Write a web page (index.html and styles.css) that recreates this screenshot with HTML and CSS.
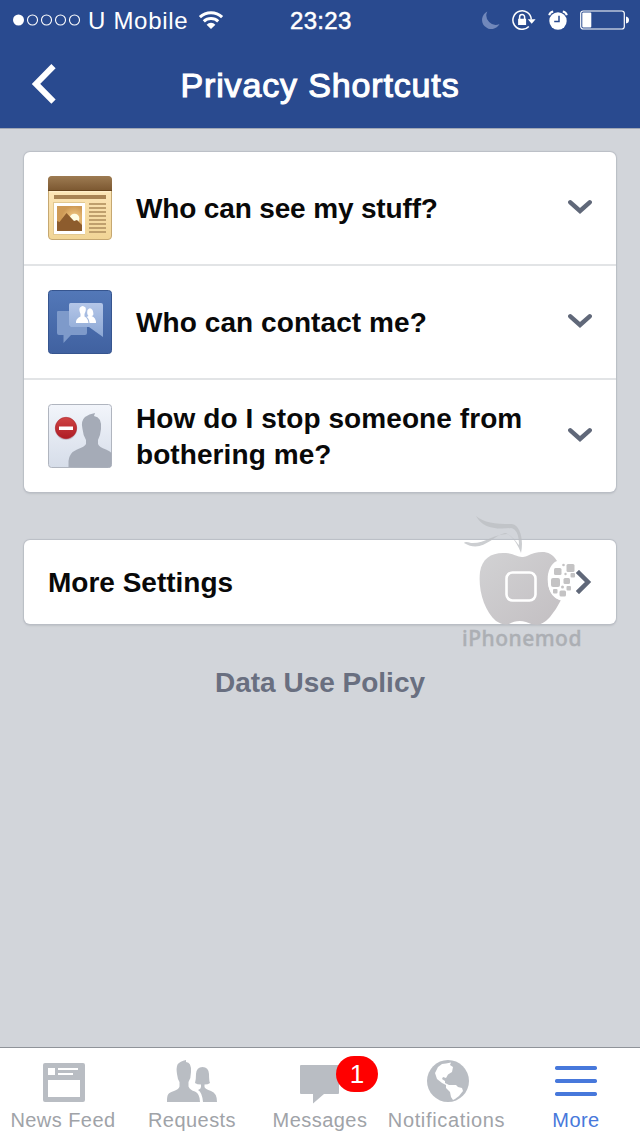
FILE: index.html
```html
<!DOCTYPE html>
<html lang="en">
<head>
<meta charset="utf-8">
<title>Privacy Shortcuts</title>
<link rel="stylesheet" href="styles.css">
</head>
<body>
<div class="screen">
  <header class="header">
    <div class="status">
      <div class="status-left">
        <svg class="signal" width="68" height="12" viewBox="0 0 68 12" fill="none" stroke="#fff" stroke-width="1.1">
          <circle cx="5.5" cy="6" r="5.5" fill="#fff" stroke="none"/><circle cx="19.5" cy="6" r="5"/><circle cx="33.5" cy="6" r="5"/><circle cx="47.5" cy="6" r="5"/><circle cx="61.5" cy="6" r="5"/>
        </svg>
        <span class="carrier">U Mobile</span>
        <svg class="wifi" width="26" height="20" viewBox="0 0 26 20" fill="none" stroke="#fff" stroke-width="3">
          <path d="M1.900 7.200A16 16 0 0 1 24.100 7.200"/><path d="M5.800 11.400A10.400 10.400 0 0 1 20.200 11.400"/><path d="M13 19L8.600 14.700A6.200 6.200 0 0 1 17.400 14.700Z" fill="#fff" stroke="none"/>
        </svg>
      </div>
      <span class="time">23:23</span>
      <div class="status-right">
        <svg width="19" height="19" viewBox="0 0 19 19"><path fill="#7188bb" d="M6.300 .6A9.200 9.200 0 1 0 18.500 13A9.300 9.300 0 0 1 6.300 .6Z"/></svg>
        <svg width="24" height="20" viewBox="0 0 24 20">
          <path fill="none" stroke="#fff" stroke-width="1.500" d="M16.800 16.400A9.200 9.200 0 1 1 19.300 9.500"/><path fill="#fff" d="M15.800 9.200H23.600L19.700 13.700ZM6.100 8.800H14.100V15H6.100Z"/><path fill="none" stroke="#fff" stroke-width="1.500" d="M7.600 9V7A2.500 2.500 0 0 1 12.600 7V9"/>
        </svg>
        <svg width="20" height="20" viewBox="0 0 20 20">
          <circle cx="10" cy="11" r="8.700" fill="#fff"/><path fill="none" stroke="#fff" stroke-width="2" d="M1.200 5.200Q1.900 2.200 5.200 1.500M18.800 5.200Q18.100 2.200 14.800 1.500"/><path fill="none" stroke="#294a8f" stroke-width="1.500" d="M11 5.800V11.500H6.200"/>
        </svg>
        <svg width="50" height="20" viewBox="0 0 50 20">
          <rect x=".7" y="1" width="43.600" height="18" rx="2.500" fill="none" stroke="#fff" stroke-width="1.200"/><rect x="2.300" y="2.600" width="9" height="14.800" rx="1" fill="#fff"/><path fill="#fff" d="M46 6.500Q49 7 49 10T46 13.500Z"/>
        </svg>
      </div>
    </div>
    <div class="nav">
      <svg class="back" width="26" height="40" viewBox="0 0 26 40"><path fill="none" stroke="#fff" stroke-width="6" d="M22.500 2.200L5 19.900L22.500 37.600"/></svg>
      <h1 class="title">Privacy Shortcuts</h1>
    </div>
  </header>

  <main class="content">
    <section class="card">
      <div class="row">
        <svg class="picture" viewBox="0 0 64 64">
          <defs>
            <linearGradient id="paper" x2="0" y2="1"><stop stop-color="#ffeac0"/><stop offset="1" stop-color="#f1d596"/></linearGradient>
            <linearGradient id="wood" x2="0" y2="1"><stop stop-color="#9d7b52"/><stop offset="1" stop-color="#7b5730"/></linearGradient>
            <radialGradient id="sunset" cx=".68" cy=".5"><stop stop-color="#f9d28d"/><stop offset="1" stop-color="#ce9a56"/></radialGradient>
          </defs>
          <rect x=".5" y=".5" width="63" height="63" rx="3.500" fill="url(#paper)" stroke="#c6a871"/>
          <path d="M0 15V4Q0 0 4 0H60Q64 0 64 4V15Z" fill="url(#wood)"/><path d="M0 14.500H64" stroke="#68451f"/><path d="M1 15.700H63" stroke="#fff1cf"/>
          <path d="M6 19H58V23H6Z" fill="#a98454"/>
          <rect x="5" y="26" width="32" height="33" fill="#e2c890"/><rect x="6" y="27" width="31" height="31" fill="#fff"/>
          <path d="M9 30H34V55H9Z" fill="url(#sunset)"/><circle cx="26.500" cy="42.500" r="4.800" fill="#fffce3"/>
          <path d="M9 45L11.500 46L18.500 37L26 45L29 44L34 49V55H9Z" fill="#8d5c2d"/>
          <path d="M41 28H58M41 32H58M41 36H58M41 40H58M41 44H58M41 48H58M41 52H58M41 56H58" stroke="#bfa06d" stroke-width="1.800"/>
        </svg>
        <span class="label label-see">Who can see my stuff?</span>
        <svg class="chevron" viewBox="0 0 24 16"><path d="M2.300 3.300L12 12L21.700 3.300"/></svg>
      </div>
      <div class="row">
        <svg class="picture" viewBox="0 0 64 64">
          <defs>
            <linearGradient id="blue" x2="0" y2="1"><stop stop-color="#5378b8"/><stop offset="1" stop-color="#4061a0"/></linearGradient>
            <linearGradient id="bubble" x2="0" y2="1"><stop stop-color="#b4c6e8"/><stop offset="1" stop-color="#8ba7d4"/></linearGradient>
          </defs>
          <rect x=".5" y=".5" width="63" height="63" rx="3" fill="url(#blue)" stroke="#36558f"/>
          <path fill="#7e9aca" d="M10 21H21V35Q21 37 23 37H39V43Q39 45 37 45H23L15.500 53V45H11Q9 45 9 43V22Q9 21 10 21Z"/>
          <path fill="url(#bubble)" d="M22.500 13H53Q55 13 55 15V47L41 37H23Q21 37 21 35V15Q21 13 22.500 13Z"/>
          <g fill="#fff"><path d="M28 33Q27.500 28.500 32.500 26.500V24Q30.500 19 32 17.500Q34.500 14.500 37.500 17.500Q38.500 20 36.500 24V26.500Q40 28 40.500 33Z"/><path d="M41.500 33Q41 28 38.500 27L40.500 26Q38.500 24 39.500 20Q42 16.500 44.500 20Q46 24 45 25.500L43.500 26Q48 27.500 48 33Z"/></g>
        </svg>
        <span class="label label-contact">Who can contact me?</span>
        <svg class="chevron" viewBox="0 0 24 16"><path d="M2.300 3.300L12 12L21.700 3.300"/></svg>
      </div>
      <div class="row">
        <svg class="picture" viewBox="0 0 64 64">
          <defs>
            <linearGradient id="pale" x2="0" y2="1"><stop stop-color="#f2f5fb"/><stop offset="1" stop-color="#d6dde9"/></linearGradient>
            <linearGradient id="red" x2="0" y2="1"><stop stop-color="#cf4444"/><stop offset="1" stop-color="#ae1b24"/></linearGradient>
          </defs>
          <rect x=".5" y=".5" width="63" height="63" rx="3" fill="url(#pale)" stroke="#b0b5bf"/>
          <path fill="#a5abb7" d="M20.500 63V57Q21 49 29 45.500Q37 42.500 38 40V36Q35 31 34.500 25Q32.500 17 37 13Q41 10 47 9L46 12Q54 13 53 25Q52.500 31 50 36V40Q51 43 58 45.500Q62 47 63.500 49V62L62 63.500Z"/>
          <circle cx="18" cy="25" r="11" fill="#9d7d91" opacity=".35"/><circle cx="18" cy="24" r="10.700" fill="url(#red)" stroke="#ab252d" stroke-width=".6"/><rect x="11" y="22.500" width="14" height="3.500" fill="#fff"/>
        </svg>
        <span class="label label-stop">How do I stop someone from bothering me?</span>
        <svg class="chevron" viewBox="0 0 24 16"><path d="M2.300 3.300L12 12L21.700 3.300"/></svg>
      </div>
    </section>
    <section class="card more-card">
      <span class="label">More Settings</span>
      <svg class="forward" width="16" height="24" viewBox="0 0 16 24"><path d="M3 3L12 12L3 21"/></svg>
      <div class="watermark">
        <svg width="130" height="116" viewBox="0 0 130 116">
          <defs><linearGradient id="apple" y2="1"><stop stop-color="#d2d2d4"/><stop offset="1" stop-color="#c3bfc2"/></linearGradient></defs>
          <path fill="#bbbdc1" opacity=".75" d="M14 0C22 7 34 8 50 8C58 9 62 24 59 37C56 28 49 18 43 17C30 20 20 38 2 27Q3 25 9 27C22 28 32 18 45 18C51 20 55 27 57 29C57 18 54 13 49 12C32 14 20 11 14 0Z"/>
          <path fill="url(#apple)" d="M18 56C20 42 30 36 44 37C55 38 56 43 65 40C76 35 88 33 95 45C82 50 82 80 99 84Q94 94 88 101C78 112 72 109 64 106C58 104 52 105 47 108Q42 110 34 105C22 94 16 74 18 56Z"/>
          <rect x="44.500" y="56.500" width="29" height="28" rx="6" fill="none" stroke="#fff" stroke-width="2.600"/>
          <path fill="#fff" d="M96 45Q105 40 111 46Q115 50 115 58Q115 68 111 76Q108 83 100 85Q87 81 86 67Q85 52 96 45Z"/>
          <g fill="#c4c3c4"><rect x="92" y="52" width="7.500" height="7" rx="1.500"/><rect x="104.500" y="48" width="8" height="8" rx="1.500"/><rect x="108.500" y="57" width="4.500" height="4.500" rx="1"/><rect x="89" y="62" width="9" height="9" rx="2"/><rect x="101.500" y="62" width="6.500" height="6" rx="1.500"/><rect x="104.500" y="70" width="4.500" height="4.500" rx="1"/><rect x="91" y="73" width="4.500" height="4.500" rx="1"/><rect x="97.500" y="74.500" width="6.500" height="6" rx="1.500"/><circle cx="101.500" cy="49" r="1.300"/><circle cx="103.500" cy="58" r="1.200"/><circle cx="100.500" cy="71" r="1.500"/></g>
        </svg>
        <span class="watermark-name">iPhonemod</span>
      </div>
    </section>
    <a class="policy">Data Use Policy</a>
  </main>

  <nav class="tabs">
    <div class="tab">
      <svg class="tab-icon" viewBox="0 0 60 48"><path fill="#b9bdc3" fill-rule="evenodd" d="M11 7H49Q51 7 51 9V44Q51 46 49 46H11Q9 46 9 44V9Q9 7 11 7ZM14 12V19H21V12ZM24 12V14H44V12ZM24 17V19H39V17ZM14 24V41H46V24Z"/></svg>
      <span class="news-label">News Feed</span>
    </div>
    <div class="tab">
      <svg class="tab-icon" viewBox="0 0 60 48" fill="#b9bdc3"><path d="M5 46C5 38 6 37 12 35Q17 33 17.500 30.500V26Q15.500 23 15 18Q14 12 15.500 8.500Q18 5 24 4V6Q29.500 6 29 16Q29 22 26.500 26V30.500Q28 34 33 35.500Q38 38 38 46Z"/><path d="M41 46Q40 36 36 34Q39 33 39 31V28.500Q35 28.500 33 27Q34 24 34 18Q34.500 11 40.500 11Q46.500 11 47 18Q47 25 48 27Q46 28.500 42.500 28.500V31Q43 33 49 35Q55 37 55 46Z"/></svg>
      <span class="requests-label">Requests</span>
    </div>
    <div class="tab">
      <svg class="tab-icon" viewBox="0 0 60 48"><path fill="#b9bdc3" d="M11 9H48Q49 9 49 10V37Q49 38 48 38H34L23 47.500V38H11Q10 38 10 37V10Q10 9 11 9Z"/></svg>
      <span class="badge">1</span>
      <span class="messages-label">Messages</span>
    </div>
    <div class="tab">
      <svg class="tab-icon" viewBox="0 0 60 48"><circle cx="30" cy="25" r="21" fill="#b9bdc3"/><path fill="#fff" d="M17 17L20 11L24 8L28 7.500L33 6.500L32 9L35 11L34 16L30 18.500L28 22L25 21L24 23L27 25L27 27L31 29L38 29L40 31L44 32L45 35L41 40L37 43L35 44L33 41L32 36L28 32L28 29L24 27L19 23Z"/></svg>
      <span class="notifications-label">Notifications</span>
    </div>
    <div class="tab active">
      <svg class="tab-icon" viewBox="0 0 60 48" fill="#4778db"><rect x="9" y="10" width="42" height="4" rx="1.700"/><rect x="9" y="23" width="42" height="4" rx="1.700"/><rect x="9" y="36" width="42" height="4" rx="1.700"/></svg>
      <span class="more-label">More</span>
    </div>
  </nav>
</div>
</body>
</html>
```

FILE: styles.css
```css
* { box-sizing: border-box; }
body { margin: 0; font-family: "Liberation Sans", Arial, sans-serif; }
svg { display: block; flex: none; }
.screen { width: 640px; height: 1136px; display: flex; flex-direction: column; background: #d2d5da; }
.header { height: 129px; background: #294a8f; color: #fff; flex: none; border-bottom: 1px solid #a0a7b5; }
.status { height: 40px; display: grid; grid-template-columns: 290px 62px 1fr; align-items: center; }
.status-left { display: flex; align-items: center; padding-left: 13px; }
.carrier { width: 99px; margin-left: 7px; margin-right: 11px; padding-top: 2px; font-size: 24px; letter-spacing: .7px; white-space: nowrap; }
.time { padding-top: 2px; font-size: 24px; letter-spacing: .3px; -webkit-text-stroke: .5px #fff; }
.status-right { display: flex; align-items: center; justify-content: flex-end; padding-right: 10px; gap: 12px; }
.nav { height: 88px; display: grid; grid-template-columns: 31px 26px 1fr 57px; align-items: center; }
.back { grid-column: 2; }
.title { grid-column: 3; margin: 0; padding-top: 1px; text-align: center; font-size: 34px; font-weight: normal; letter-spacing: .85px; line-height: 40px; white-space: nowrap; -webkit-text-stroke: 1.1px #fff; }
.content { flex: 1; display: flex; flex-direction: column; padding: 23px 24px 24px; }
.card { background: #fff; border-radius: 6px; box-shadow: 0 0 1px 1px #babec5, 0 2px 2px #bfc2c7; flex: none; }
.row { height: 114px; display: flex; align-items: center; padding: 0 24px; border-bottom: 2px solid #e2e4e6; }
.row:last-child { height: 112px; border: 0; }
.picture { width: 64px; height: 64px; margin-right: 24px; }
.label { padding-top: 1px; color: #090909; font-size: 28px; line-height: 36px; font-weight: bold; }
.row .label { width: 400px; }
.label-see { letter-spacing: -.15px; }
.label-contact { letter-spacing: .08px; }
.label-stop { letter-spacing: .08px; }
.chevron { width: 24px; height: 16px; margin: -2px 0 0 auto; }
.chevron path, .forward path { fill: none; stroke: #606879; stroke-width: 4.5; }
.chevron path { stroke-linecap: round; }
.forward path { stroke-linecap: square; }
.more-card { position: relative; height: 84px; margin-top: 48px; display: flex; align-items: center; justify-content: space-between; padding: 0 24px; }
.forward { z-index: 2; }
.watermark { position: absolute; left: 438px; top: -24px; width: 130px; display: flex; flex-direction: column; }
.watermark-name { margin-top: -8px; color: #acafb4; font: 500 21px/28px "Noto Sans", sans-serif; letter-spacing: .5px; -webkit-text-stroke: .4px #acafb4; }
.policy { margin-top: 41px; text-align: center; color: #696f80; font-size: 28px; line-height: 36px; font-weight: bold; }
.tabs { height: 89px; flex: none; display: grid; grid-template-columns: repeat(5, 128px); background: #fff; border-top: 1px solid #8f9399; color: #a0a3a8; font-size: 20px; letter-spacing: .45px; }
.tab { position: relative; display: flex; flex-direction: column; align-items: center; padding-top: 8px; line-height: 32px; white-space: nowrap; }
.tab-icon { width: 60px; height: 48px; }
.notifications-label { margin-left: -3px; letter-spacing: .65px; }
.news-label { margin-left: -2px; }
.badge { position: absolute; left: 80px; top: 8px; width: 42px; height: 36px; border-radius: 18px; background: #f00; color: #fff; font-size: 26px; line-height: 36px; text-align: center; letter-spacing: 0; }
.active { color: #4778db; }
```
